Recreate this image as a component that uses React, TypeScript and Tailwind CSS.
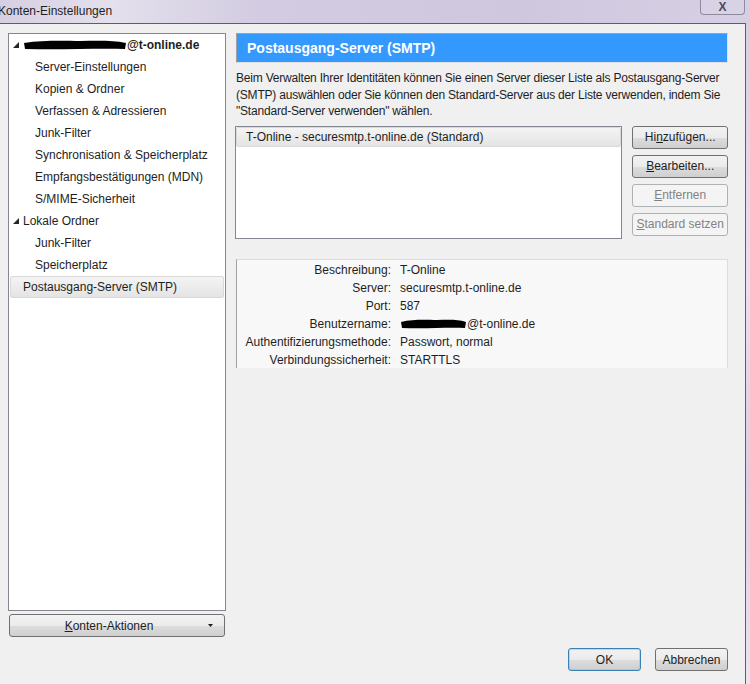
import { useState } from "react";

const font = "font-['Liberation_Sans',Arial,sans-serif]";

function Redacted({ w }: { w: number }) {
  // black marker blot over private text
  return (
    <svg width={w} height="12" viewBox={`0 0 ${w} 12`} className="inline-block shrink-0 align-middle">
      <path
        d={`M1 4 C ${w * 0.2} 1, ${w * 0.4} 2, ${w * 0.55} 2 S ${w * 0.85} 1, ${w - 1} 4 L ${w - 2} 10 C ${w * 0.7} 9, ${w * 0.4} 11, 2 10 Z`}
        fill="#000"
      />
    </svg>
  );
}

function Twisty() {
  return (
    <svg width="6" height="6" viewBox="0 0 6 6" className="shrink-0">
      <path d="M6 0 L6 6 L0 6 Z" fill="#262626" />
    </svg>
  );
}

function TreeRow({
  label,
  level,
  open,
  selected,
  bold,
  children,
}: {
  label?: string;
  level: number;
  open?: boolean;
  selected?: boolean;
  bold?: boolean;
  children?: React.ReactNode;
}) {
  return (
    <div
      className={`mx-px flex h-[22px] items-center whitespace-nowrap text-[12px] text-[#1e1e1e] ${
        selected ? "rounded-[2px] border border-[#d9d9d9] bg-[linear-gradient(#f4f4f4,#e4e4e4)]" : "border border-transparent"
      } ${bold ? "font-bold" : ""}`}
    >
      <div className={level === 0 ? "w-[12px] pl-[2px]" : "w-[24px]"}>{open && <Twisty />}</div>
      <span>{children ?? label}</span>
    </div>
  );
}

function Btn({
  children,
  disabled,
  className = "",
  primary,
}: {
  children: React.ReactNode;
  disabled?: boolean;
  className?: string;
  primary?: boolean;
}) {
  const base = disabled
    ? "border-[#adb2b5] bg-[#f4f4f4] text-[#838383]"
    : primary
    ? "border-[#3c7fb1] bg-[linear-gradient(#f2f2f2_0%,#ebebeb_50%,#dddddd_51%,#cfcfcf_100%)] text-[#1e1e1e] shadow-[inset_0_0_0_1px_#48d7fb80]"
    : "border-[#707070] bg-[linear-gradient(#f2f2f2_0%,#ebebeb_50%,#dddddd_51%,#cfcfcf_100%)] text-[#1e1e1e]";
  return (
    <div
      className={`flex h-[23px] items-center justify-center rounded-[3px] border text-[12px] ${base} ${className}`}
    >
      {children}
    </div>
  );
}

export default function App() {
  const [selected] = useState("smtp");

  const details: [string, React.ReactNode][] = [
    ["Beschreibung:", "T-Online"],
    ["Server:", "securesmtp.t-online.de"],
    ["Port:", "587"],
    [
      "Benutzername:",
      <span className="flex items-center">
        <Redacted w={67} />
        @t-online.de
      </span>,
    ],
    ["Authentifizierungsmethode:", "Passwort, normal"],
    ["Verbindungssicherheit:", "STARTTLS"],
  ];

  return (
    <div className={`flex h-[684px] w-[750px] flex-col overflow-hidden bg-[#d9d2e6] ${font}`}>
      {/* title bar */}
      <div className="flex h-[23px] shrink-0 items-start bg-[linear-gradient(90deg,#d6cfe2_0%,#e4e0ec_15%,#d2cbe1_35%,#cfc7de_70%,#d7d0e4_100%)]">
        <div className="ml-[-2px] mt-[2px] whitespace-nowrap text-[12px] text-[#1e1e1e]">Konten-Einstellungen</div>
        <div className="ml-auto mr-[5px] flex h-[15px] w-[45px] items-center justify-center rounded-b-[4px] border border-t-0 border-[#8e8aa0] bg-[#d8d2e4] text-[12px] font-bold leading-none text-[#4a4a5a]">
          X
        </div>
      </div>

      <div className="flex flex-1">
        {/* window body */}
        <div className="flex w-[746px] shrink-0 flex-col border-r border-t border-[#5e5e6a] bg-[#f0f0f0] pl-[8px] pr-[17px] pt-[9px]">
          <div className="flex gap-[9px]">
            {/* left column */}
            <div className="flex w-[218px] shrink-0 flex-col">
              <div className="h-[578px] border border-[#828790] bg-white">
                <TreeRow level={0} open bold>
                  <span className="flex items-center">
                    <Redacted w={104} />
                    @t-online.de
                  </span>
                </TreeRow>
                <TreeRow level={1} label="Server-Einstellungen" />
                <TreeRow level={1} label="Kopien & Ordner" />
                <TreeRow level={1} label="Verfassen & Adressieren" />
                <TreeRow level={1} label="Junk-Filter" />
                <TreeRow level={1} label="Synchronisation & Speicherplatz" />
                <TreeRow level={1} label="Empfangsbestätigungen (MDN)" />
                <TreeRow level={1} label="S/MIME-Sicherheit" />
                <TreeRow level={0} open label="Lokale Ordner" />
                <TreeRow level={1} label="Junk-Filter" />
                <TreeRow level={1} label="Speicherplatz" />
                <TreeRow level={0} selected={selected === "smtp"} label="Postausgang-Server (SMTP)" />
              </div>
              <Btn className="relative mx-px mt-[3px] pr-[16px]">
                <span>
                  <u>K</u>onten-Aktionen
                </span>
                <svg width="5" height="3" viewBox="0 0 5 3" className="absolute right-[11px] top-[9px]">
                  <path d="M0 0 H5 L2.5 3 Z" fill="#1e1e1e" />
                </svg>
              </Btn>
            </div>

            {/* right column */}
            <div className="flex w-[494px] min-w-0 flex-col">
              <div className="ml-px flex h-[30px] items-center border border-[#a0a0a0] border-b-[#e0e0e0] border-r-[#e0e0e0] bg-[#3399ff] pl-[10px] text-[14px] font-bold text-white">
                Postausgang-Server (SMTP)
              </div>
              <p className="mt-[7px] ml-px whitespace-nowrap text-[12px] leading-[16.5px] tracking-[-0.2px] text-[#1e1e1e]">
                Beim Verwalten Ihrer Identitäten können Sie einen Server dieser Liste als Postausgang-Server
                <br />
                (SMTP) auswählen oder Sie können den Standard-Server aus der Liste verwenden, indem Sie
                <br />
                "Standard-Server verwenden" wählen.
              </p>

              <div className="mt-[6px] flex gap-[10px]">
                <div className="h-[113px] w-[389px] border border-[#828790] bg-white">
                  <div className="flex h-[20px] items-center rounded-[2px] border border-[#d9d9d9] bg-[linear-gradient(#f4f4f4,#e4e4e4)] pl-[9px] text-[12px] text-[#1e1e1e]">
                    T-Online - securesmtp.t-online.de (Standard)
                  </div>
                </div>
                <div className="flex w-[96px] flex-col gap-[6px]">
                  <Btn>
                    <span>
                      Hi<u>n</u>zufügen...
                    </span>
                  </Btn>
                  <Btn>
                    <span>
                      <u>B</u>earbeiten...
                    </span>
                  </Btn>
                  <Btn disabled>
                    <span>
                      <u>E</u>ntfernen
                    </span>
                  </Btn>
                  <Btn disabled>
                    <span>
                      <u>S</u>tandard setzen
                    </span>
                  </Btn>
                </div>
              </div>

              <div className="ml-px mt-[20px] grid h-[109px] grid-cols-[154px_1fr] content-start gap-x-[9px] border-l border-r border-t border-l-[#a0a0a0] border-r-[#dcdcdc] border-t-[#dcdcdc] bg-[#f8f8f8] pt-[1px] text-[12px] leading-[18px] text-[#1e1e1e]">
                {details.map(([k, v]) => (
                  <div key={k} className="contents">
                    <div className="text-right">{k}</div>
                    <div>{v}</div>
                  </div>
                ))}
              </div>
            </div>
          </div>

          {/* footer */}
          <div className="mt-[11px] flex justify-end gap-[14px]">
            <Btn primary className="w-[73px]">
              OK
            </Btn>
            <Btn className="w-[73px]">Abbrechen</Btn>
          </div>
        </div>
        <div className="flex-1 bg-[linear-gradient(#d8cfe2,#e9dfee_40%,#d9cde3_70%,#ece4f0)]" />
      </div>
    </div>
  );
}
